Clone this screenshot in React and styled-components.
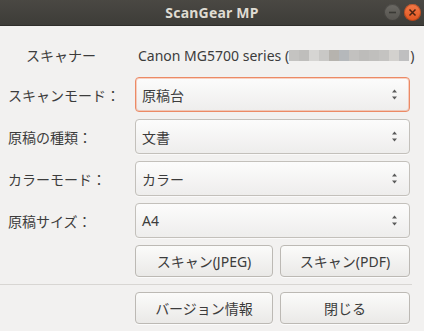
import React from "react"
import styled, { createGlobalStyle } from "styled-components"

const GlobalStyle = createGlobalStyle`
  html, body {
    margin: 0;
    padding: 0;
    background: #f2f1f0;
  }
  body {
    font-family: "Noto Sans", "Noto Sans CJK JP", sans-serif;
  }
`

const Window = styled.div`
  width: 424px;
  height: 331px;
  background: #f2f1f0;
  display: flex;
  flex-direction: column;
  overflow: hidden;
`

const TitleBar = styled.div`
  height: 26px;
  flex-shrink: 0;
  display: grid;
  grid-template-columns: 1fr auto 1fr;
  align-items: center;
  background: linear-gradient(#4a4843, #3d3c38);
  border-bottom: 1px solid #2f2e2b;
  box-sizing: border-box;
`

const Title = styled.div`
  grid-column: 2;
  color: #dfdbd2;
  font-size: 14px;
  font-weight: 700;
  letter-spacing: 0.2px;
`

const WindowButtons = styled.div`
  grid-column: 3;
  justify-self: end;
  display: flex;
  gap: 3px;
  padding-right: 3px;
`

const Circle = styled.div`
  width: 17px;
  height: 17px;
  border-radius: 50%;
  display: flex;
  align-items: center;
  justify-content: center;
  background: ${(props) =>
    props.close
      ? "linear-gradient(#f47a48, #df5520)"
      : "linear-gradient(#6b6964, #56544f)"};
  box-shadow: inset 0 0 0 1px ${(props) => (props.close ? "rgba(120,40,10,0.4)" : "rgba(0,0,0,0.25)")};
`

const Body = styled.div`
  padding: 14px 14px 0 8px;
  display: flex;
  flex-direction: column;
`

const Form = styled.div`
  display: grid;
  grid-template-columns: 127px 275px;
  row-gap: 7px;
  align-items: center;
`

const Label = styled.div`
  font-size: 14px;
  color: #3c3c3c;
  padding-left: ${(props) => props.indent || 0}px;
  white-space: nowrap;
`

const ScannerValue = styled.div`
  height: 30px;
  display: flex;
  align-items: center;
  padding-left: 3px;
  font-size: 14px;
  color: #3c3c3c;
  white-space: nowrap;
`

const Blurred = styled.span`
  display: inline-flex;
  height: 11px;
  margin: 0 1px 0 0;
`

const BlurCell = styled.span`
  width: 10px;
  height: 11px;
  background: ${(props) => props.color};
`

const Combo = styled.div`
  height: 35px;
  box-sizing: border-box;
  border-radius: 4px;
  border: 1px solid ${(props) => (props.focused ? "#ec8a65" : "#c3c0bb")};
  box-shadow: ${(props) =>
    props.focused
      ? "inset 0 0 0 1px rgba(240,130,90,0.35)"
      : "0 1px 0 rgba(255,255,255,0.6)"};
  background: linear-gradient(#fcfcfc, #eeedec);
  display: flex;
  align-items: center;
  justify-content: space-between;
  padding: 0 11px 0 6px;
  font-size: 14px;
  color: #3c3c3c;
`

const Arrows = styled.svg`
  display: block;
  flex-shrink: 0;
`

const ButtonRow = styled.div`
  display: grid;
  grid-template-columns: 138px 130px;
  column-gap: 7px;
  margin-left: 127px;
  margin-top: 7px;
`

const Button = styled.div`
  height: 32px;
  box-sizing: border-box;
  border: 1px solid #bcb9b4;
  border-radius: 4px;
  background: linear-gradient(#fbfbfa, #eae9e7);
  box-shadow: 0 1px 0 rgba(255,255,255,0.7);
  display: flex;
  align-items: center;
  justify-content: center;
  font-size: 14px;
  color: #3c3c3c;
  white-space: nowrap;
`

const Separator = styled.div`
  height: 1px;
  background: #d8d6d3;
  margin: 7px -2px 0 -8px;
`

const blurColors = [
  "#c4c3c1", "#bfbebc", "#d6d5d3", "#c9c8c6", "#b6b3ae", "#b5b8bb",
  "#c2c1bf", "#bdbcba", "#c0bfbd", "#c4c3c1", "#d3d1ce", "#bfbfc0",
]

const SpinArrows = () => (
  <Arrows width="7" height="13" viewBox="0 0 7 13">
    <path d="M3.5 1.5 L6 4.5 L1 4.5 Z" fill="#5a5a5a" />
    <path d="M3.5 11.5 L6 8.5 L1 8.5 Z" fill="#5a5a5a" />
  </Arrows>
)

const rows = [
  { label: "スキャンモード：", value: "原稿台", focused: true },
  { label: "原稿の種類：", value: "文書" },
  { label: "カラーモード：", value: "カラー" },
  { label: "原稿サイズ：", value: "A4" },
]

const App = () => {
  return (
    <>
      <GlobalStyle />
      <Window>
        <TitleBar>
          <Title>ScanGear MP</Title>
          <WindowButtons>
            <Circle>
              <svg width="9" height="9" viewBox="0 0 9 9">
                <path d="M1 4.5 H8" stroke="#3a3935" strokeWidth="1.6" />
              </svg>
            </Circle>
            <Circle close>
              <svg width="9" height="9" viewBox="0 0 9 9">
                <path d="M1.5 1.5 L7.5 7.5 M7.5 1.5 L1.5 7.5" stroke="#4a2312" strokeWidth="1.5" />
              </svg>
            </Circle>
          </WindowButtons>
        </TitleBar>
        <Body>
          <Form>
            <Label indent={18}>スキャナー</Label>
            <ScannerValue>
              Canon MG5700 series (
              <Blurred>
                {blurColors.map((c, i) => (
                  <BlurCell key={i} color={c} />
                ))}
              </Blurred>
              )
            </ScannerValue>
            {rows.map((row) => (
              <React.Fragment key={row.label}>
                <Label>{row.label}</Label>
                <Combo focused={row.focused}>
                  {row.value}
                  <SpinArrows />
                </Combo>
              </React.Fragment>
            ))}
          </Form>
          <ButtonRow>
            <Button>スキャン(JPEG)</Button>
            <Button>スキャン(PDF)</Button>
          </ButtonRow>
          <Separator />
          <ButtonRow>
            <Button>バージョン情報</Button>
            <Button>閉じる</Button>
          </ButtonRow>
        </Body>
      </Window>
    </>
  )
}

export default App
